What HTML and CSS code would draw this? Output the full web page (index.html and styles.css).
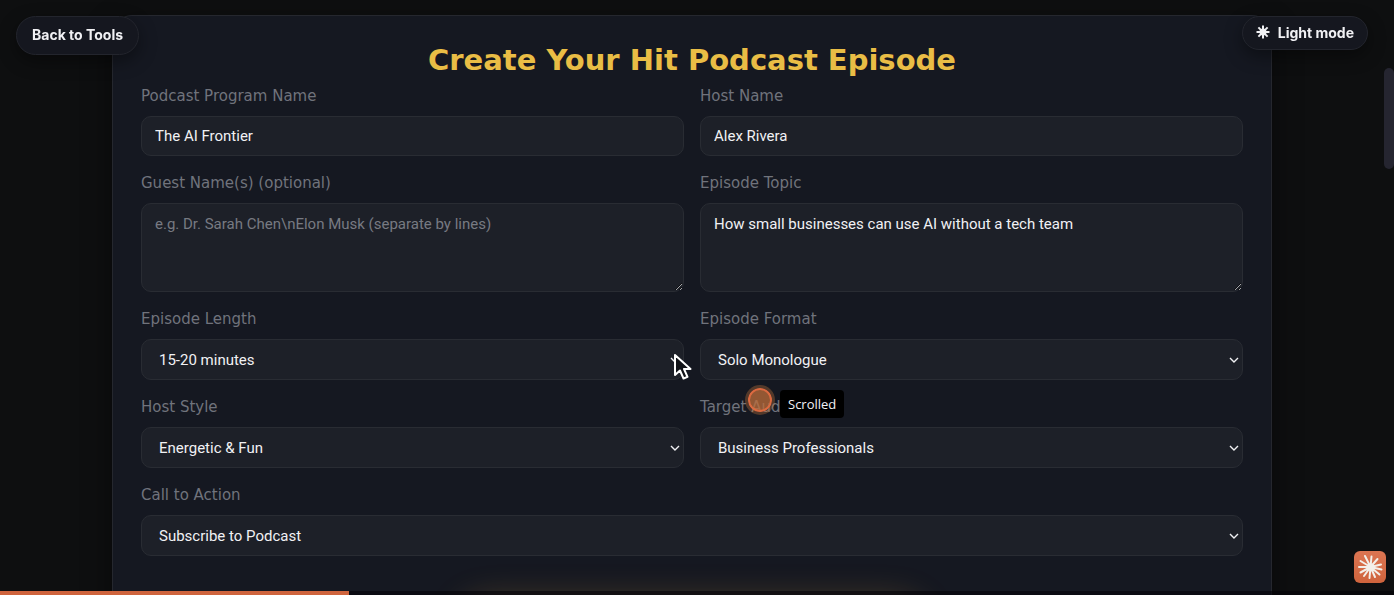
FILE: index.html
```html
<!DOCTYPE html>
<html lang="en">
<head>
    <meta charset="UTF-8">
    <meta name="viewport" content="width=device-width, initial-scale=1.0">
    <title>Create Your Hit Podcast Episode</title>
    <link rel="stylesheet" href="styles.css">
</head>
<body>
    <a class="pill back-link" href="#">Back to Tools</a>
    <button class="pill theme-toggle" type="button">
        <svg class="theme-icon" viewBox="0 0 14 14" aria-hidden="true">
            <path d="M7 0.5V13.5M0.5 7H13.5M2.4 2.4L11.6 11.6M11.6 2.4L2.4 11.6"/>
            <circle cx="7" cy="7" r="2.5"/>
        </svg>
        Light mode
    </button>

    <main class="page">
        <form class="card">
            <h1 class="card-title">Create Your Hit Podcast Episode</h1>
            <div class="form-grid">
                <div class="field">
                    <label for="program">Podcast Program Name</label>
                    <input id="program" type="text" value="The AI Frontier">
                </div>
                <div class="field">
                    <label for="host">Host Name</label>
                    <input id="host" type="text" value="Alex Rivera">
                </div>
                <div class="field">
                    <label for="guests">Guest Name(s) (optional)</label>
                    <textarea id="guests" placeholder="e.g. Dr. Sarah Chen\nElon Musk (separate by lines)"></textarea>
                </div>
                <div class="field">
                    <label for="topic">Episode Topic</label>
                    <textarea id="topic">How small businesses can use AI without a tech team</textarea>
                </div>
                <div class="field">
                    <label for="length">Episode Length</label>
                    <select id="length"><option>15-20 minutes</option></select>
                </div>
                <div class="field">
                    <label for="format">Episode Format</label>
                    <select id="format"><option>Solo Monologue</option></select>
                </div>
                <div class="field">
                    <label for="style">Host Style</label>
                    <select id="style"><option>Energetic &amp; Fun</option></select>
                </div>
                <div class="field">
                    <label for="audience">Target Audience</label>
                    <select id="audience"><option>Business Professionals</option></select>
                </div>
                <div class="field field-wide">
                    <label for="cta">Call to Action</label>
                    <select id="cta"><option>Subscribe to Podcast</option></select>
                </div>
            </div>
            <div class="glow"></div>
        </form>
    </main>

    <div class="scroll-thumb"></div>

    <svg class="cursor" viewBox="0 0 20 28" aria-hidden="true">
        <path d="M2 2V22L7 17.5L10.5 25.5L14.5 23.8L11 16H17.5Z"/>
    </svg>
    <div class="click-dot"></div>
    <div class="tooltip">Scrolled</div>

    <div class="progress"><div class="progress-fill"></div></div>
    <svg class="badge" viewBox="0 0 32 32" aria-hidden="true">
        <defs>
            <linearGradient id="badge-fill" x1="0" y1="0" x2="0" y2="1">
                <stop offset="0" stop-color="#dc7552"/>
                <stop offset="1" stop-color="#cf643d"/>
            </linearGradient>
        </defs>
        <rect width="32" height="32" rx="6" fill="url(#badge-fill)"/>
        <path class="badge-rays" d="M16.5 16L17.5 5.5M16.5 16L23.5 8M16.5 16L27 13.5M16.5 16L27.5 18.5M16.5 16L25.5 23.5M16.5 16L21 26M16.5 16L15.5 27M16.5 16L10 25M16.5 16L6.5 21.5M16.5 16L5 16M16.5 16L6.5 10M16.5 16L11 5"/>
        <circle cx="16.5" cy="16" r="3.5" fill="#f3efe9"/>
    </svg>
</body>
</html>
```
FILE: styles.css
```css
* {
    box-sizing: border-box;
}

html {
    height: 100%;
    overflow: hidden;
}

body {
    height: 100%;
    margin: 0;
    overflow: hidden;
    background: #0e0f10;
    color: #f1f1f4;
    font-family: Inter, sans-serif;
    color-scheme: dark;
}

.page {
    padding: 15px 122px 0 112px;
}

.card {
    max-width: 1160px;
    margin: 0 auto;
    padding: 28px 28px 80px;
    background: #151821;
    border: 1px solid #25272e;
    border-radius: 20px;
    box-shadow: 0 10px 30px rgba(0, 0, 0, 0.45);
}

.card-title {
    margin: 0 0 10px;
    color: #e9bd45;
    font-family: "DejaVu Sans", sans-serif;
    font-size: 29px;
    font-weight: 700;
    line-height: 32px;
    text-align: center;
}

.form-grid {
    display: grid;
    grid-template-columns: 1fr 1fr;
    gap: 17px 16px;
}

.field {
    display: flex;
    flex-direction: column;
    gap: 10px;
}

.field-wide {
    grid-column: 1 / -1;
}

.field label {
    color: #70737c;
    font-family: "DejaVu Sans", sans-serif;
    font-size: 15px;
    line-height: 20px;
}

.field input,
.field textarea,
.field select {
    width: 100%;
    margin: 0;
    padding: 0 13px;
    background: #1d2028;
    border: 1px solid #292c33;
    border-radius: 10px;
    color: #f1f1f4;
    font-family: Roboto, sans-serif;
    font-size: 15px;
}

.field input {
    height: 40px;
}

.field textarea {
    height: 89px;
    padding: 10px 13px;
    line-height: 20px;
    resize: vertical;
}

.field textarea::placeholder {
    color: #777a82;
}

.field select {
    height: 41px;
    padding: 0 17px;
    appearance: none;
    background-image: url("data:image/svg+xml,%3Csvg xmlns='http://www.w3.org/2000/svg' width='10' height='6' fill='none' stroke='%23f1f1f4' stroke-width='1.4'%3E%3Cpath d='M1 1L5 5L9 1'/%3E%3C/svg%3E");
    background-position: right 3px center;
    background-repeat: no-repeat;
}

/* warm light under the form */
.glow {
    width: 460px;
    height: 50px;
    margin: 46px auto 0;
    border-radius: 25px;
    box-shadow: 0 0 36px rgba(233, 170, 60, 0.3);
}

.pill {
    position: fixed;
    top: 16px;
    z-index: 2;
    display: flex;
    align-items: center;
    background: #15171f;
    border: 1px solid #23252d;
    border-radius: 20px;
    box-shadow: 0 6px 18px rgba(0, 0, 0, 0.4);
    color: #f1f1f4;
    font-family: Inter, sans-serif;
    font-size: 14px;
    font-weight: 700;
    text-decoration: none;
}

.back-link {
    left: 16px;
    height: 39px;
    padding: 0 15px 2px;
}

.theme-toggle {
    right: 26px;
    height: 34px;
    padding: 0 13px 2px;
    gap: 8px;
}

.theme-icon {
    width: 14px;
    height: 14px;
    fill: #f1f1f4;
    stroke: #f1f1f4;
    stroke-width: 2;
}

.scroll-thumb {
    position: fixed;
    top: 68px;
    right: 0;
    width: 10px;
    height: 101px;
    border-radius: 5px;
    background: #252530;
}

.cursor {
    position: fixed;
    left: 673px;
    top: 353px;
    width: 20px;
    height: 28px;
    fill: #111318;
    stroke: #fff;
    stroke-width: 2;
    stroke-linejoin: round;
}

.click-dot {
    position: fixed;
    left: 748px;
    top: 388px;
    width: 24px;
    height: 24px;
    background: rgba(190, 108, 58, 0.75);
    border: 2px solid #dc6a40;
    border-radius: 50%;
    box-shadow: 0 0 0 3px rgba(200, 120, 60, 0.35);
}

.tooltip {
    position: fixed;
    left: 780px;
    top: 390px;
    padding: 0 8px;
    background: #000;
    border-radius: 4px;
    font-family: "Open Sans", sans-serif;
    font-size: 13px;
    font-weight: 500;
    line-height: 28px;
}

.progress {
    position: fixed;
    left: 0;
    right: 0;
    bottom: 0;
    height: 4px;
    background: rgba(5, 3, 8, 0.6);
}

.progress-fill {
    width: 25%;
    height: 100%;
    background: #cf643d;
}

.badge {
    position: fixed;
    right: 8px;
    bottom: 12px;
    width: 32px;
    height: 32px;
}

.badge-rays {
    fill: none;
    stroke: #f3efe9;
    stroke-width: 2;
    stroke-linecap: round;
}
```
